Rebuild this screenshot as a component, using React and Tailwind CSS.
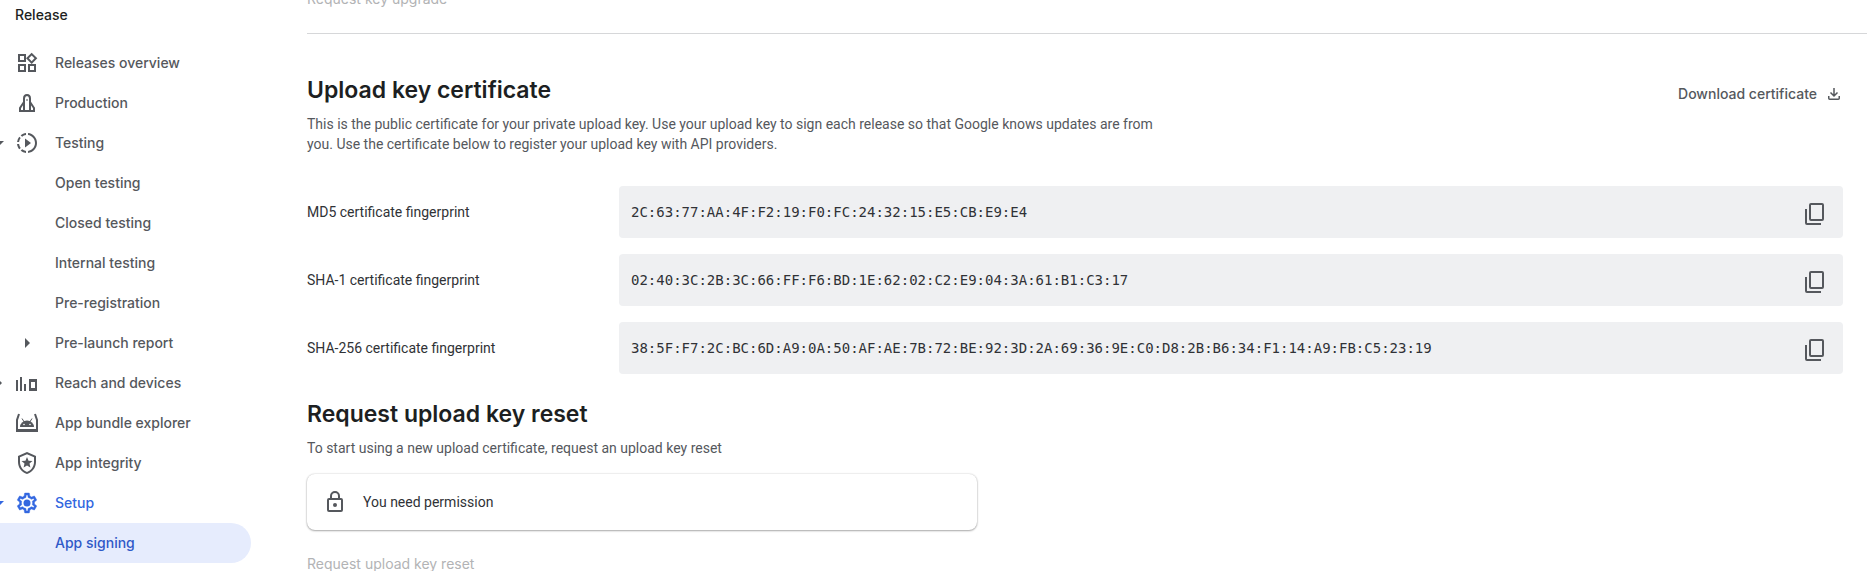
import React from "react";
import { MdOutlineWidgets, MdSlowMotionVideo, MdOutlineLocalPolice, MdArrowDropDown, MdArrowRight } from "react-icons/md";

const SANS = "font-['Inter',sans-serif]";

function ProductionIcon() {
  return (
    <svg viewBox="0 0 24 24" className="size-6" fill="none" stroke="currentColor" strokeWidth="2">
      <path d="M9 20V7.500C9 5 10.300 4 12 4s3 1 3 3.500V20" />
      <path d="M9 11l-4 6v3h14v-3l-4-6" />
      <path d="M12 8v2" strokeWidth="1" />
    </svg>
  );
}

function ReachIcon() {
  return (
    <svg viewBox="0 0 24 24" className="size-6" fill="none" stroke="currentColor" strokeWidth="2">
      <path d="M2 9v11M6 6v14M10 13v7" />
      <rect x="15" y="9" width="6" height="10" />
      <path d="M14 9.500h8M14 18.500h8" strokeWidth="3" />
    </svg>
  );
}

function BundleIcon() {
  return (
    <svg viewBox="0 0 24 24" className="size-6" fill="none" stroke="currentColor">
      <path d="M4 3L2 9v10h20V9l-2-6" strokeWidth="2" />
      <path d="M1 19.500h22" strokeWidth="3" />
      <path d="M5 16a7 6.500 0 0 1 14 0z" fill="currentColor" stroke="none" />
      <path d="M7 7.500l2.200 3.500M17 7.500l-2.200 3.500" />
      <circle cx="9" cy="13.500" r="0.800" fill="#fff" stroke="none" />
      <circle cx="15" cy="13.500" r="0.800" fill="#fff" stroke="none" />
    </svg>
  );
}

function SettingsIcon() {
  return (
    <svg viewBox="0 0 24 24" className="size-6" fill="currentColor">
      <path d="M19.430 12.980c.04-.32.07-.64.07-.98s-.03-.66-.07-.98l2.110-1.650c.19-.15.24-.42.12-.64l-2-3.460a.5.5 0 0 0-.61-.22l-2.490 1c-.52-.4-1.080-.73-1.690-.98l-.38-2.650A.488.488 0 0 0 14 2h-4c-.25 0-.46.18-.49.42l-.38 2.650c-.61.25-1.170.59-1.690.98l-2.490-1a.5.5 0 0 0-.61.22l-2 3.460c-.13.22-.07.49.12.64l2.110 1.650c-.04.32-.07.65-.07.98s.03.66.07.98l-2.110 1.650c-.19.15-.24.42-.12.64l2 3.460a.5.5 0 0 0 .61.22l2.490-1c.52.4 1.080.73 1.690.98l.38 2.650c.03.24.24.42.49.42h4c.25 0 .46-.18.49-.42l.38-2.650c.61-.25 1.170-.59 1.690-.98l2.490 1a.5.5 0 0 0 .61-.22l2-3.460c.12-.22.07-.49-.12-.64zm-1.980-1.710c.04.31.05.52.05.73s-.02.43-.05.73l-.14 1.130.89.7 1.080.84-.7 1.210-1.270-.51-1.040-.42-.9.68c-.43.32-.84.56-1.250.73l-1.060.43-.16 1.130-.2 1.350h-1.400l-.19-1.350-.16-1.130-1.060-.43c-.43-.18-.83-.41-1.230-.71l-.91-.7-1.060.43-1.270.51-.7-1.210 1.080-.84.89-.7-.14-1.130c-.03-.31-.05-.54-.05-.74s.02-.43.05-.73l.14-1.130-.89-.7-1.080-.84.7-1.210 1.270.51 1.040.42.9-.68c.43-.32.84-.56 1.250-.73l1.060-.43.16-1.130.2-1.350h1.390l.19 1.350.16 1.130 1.060.43c.43.18.83.41 1.230.71l.91.7 1.060-.43 1.270-.51.7 1.210-1.070.85-.89.7z" stroke="currentColor" strokeWidth="0.400" />
      <circle cx="12" cy="12" r="3.500" />
    </svg>
  );
}

function CopyIcon() {
  return (
    <svg viewBox="0 0 24 24" className="size-6" fill="none" stroke="currentColor" strokeWidth="2">
      <rect x="7" y="2" width="13" height="16" rx="1" />
      <path d="M3 7v14a1 1 0 0 0 1 1h14" />
    </svg>
  );
}

function DownloadIcon() {
  return (
    <svg viewBox="0 0 18 18" className="size-[18px]" fill="none" stroke="currentColor" strokeWidth="1.500">
      <path d="M9 3v8M5.500 7.500L9 11l3.500-3.500M3.750 11v2.250a1 1 0 0 0 1 1h8.500a1 1 0 0 0 1-1V11" />
    </svg>
  );
}

function LockIcon() {
  return (
    <svg viewBox="0 0 24 24" className="size-6" fill="none" stroke="currentColor" strokeWidth="2">
      <rect x="5" y="9" width="14" height="12" rx="1" />
      <path d="M8 9V6a4 4 0 0 1 8 0v3" />
      <circle cx="12" cy="15" r="2" fill="currentColor" stroke="none" />
    </svg>
  );
}

const NAV = [
  { label: "Releases overview", icon: <MdOutlineWidgets className="size-6" /> },
  { label: "Production", icon: <ProductionIcon /> },
  { label: "Testing", icon: <MdSlowMotionVideo className="size-6" />, caret: "down" },
  { label: "Open testing" },
  { label: "Closed testing" },
  { label: "Internal testing" },
  { label: "Pre-registration" },
  { label: "Pre-launch report", icon: <MdArrowRight className="size-6" /> },
  { label: "Reach and devices", icon: <ReachIcon />, caret: "right" },
  { label: "App bundle explorer", icon: <BundleIcon /> },
  { label: "App integrity", icon: <MdOutlineLocalPolice className="size-6" /> },
  { label: "Setup", icon: <SettingsIcon />, caret: "down", tone: "text-[#3367e0]" },
  { label: "App signing", tone: "text-[#3059c8] bg-[#e6ecfd]", current: true },
];

const PRINTS = [
  { label: "MD5 certificate fingerprint", value: "2C:63:77:AA:4F:F2:19:F0:FC:24:32:15:E5:CB:E9:E4" },
  { label: "SHA-1 certificate fingerprint", value: "02:40:3C:2B:3C:66:FF:F6:BD:1E:62:02:C2:E9:04:3A:61:B1:C3:17" },
  { label: "SHA-256 certificate fingerprint", value: "38:5F:F7:2C:BC:6D:A9:0A:50:AF:AE:7B:72:BE:92:3D:2A:69:36:9E:C0:D8:2B:B6:34:F1:14:A9:FB:C5:23:19" },
];

function NavItem({ label, icon, caret, tone = "text-[#55585d]", current }) {
  return (
    <li>
      <a
        href="#"
        aria-current={current ? "page" : undefined}
        className={`-ml-[13px] flex h-10 items-center rounded-r-full text-sm font-medium ${tone}`}
      >
        <span className="mr-1 w-6 shrink-0">
          {caret === "down" && <MdArrowDropDown className="size-6" />}
          {caret === "right" && <MdArrowRight className="size-6" />}
        </span>
        <span className="mr-4 w-6 shrink-0">{icon}</span>
        {label}
      </a>
    </li>
  );
}

export default function App() {
  return (
    <div className="flex h-screen overflow-hidden bg-white font-['Roboto',sans-serif] text-sm text-[#303236]">
      <nav className={`w-[251px] shrink-0 ${SANS}`} aria-label="Release">
        <h2 className="mt-[5px] mb-[18px] pl-[15px] text-sm font-medium text-[#1d1f22]">Release</h2>
        <ul>
          {NAV.map((item) => (
            <NavItem key={item.label} {...item} />
          ))}
        </ul>
      </nav>

      <main className="min-w-0 flex-1 pr-[31px] pl-14">
        <button type="button" disabled className={`-mt-[11px] block h-5 text-sm text-[#b2b3b5] ${SANS}`}>
          Request key upgrade
        </button>
        <hr className="mt-6 -mr-6 border-[#d6d7d9]" />

        <section className="pt-10">
          <div className="flex items-center justify-between">
            <h1 className={`text-[23px] leading-8 font-semibold text-[#1d1f22] ${SANS}`}>Upload key certificate</h1>
            <a href="#" className={`mt-2 flex items-center gap-2 text-sm font-medium text-[#55585d] ${SANS}`}>
              Download certificate
              <DownloadIcon />
            </a>
          </div>
          <p className="mt-2 max-w-[860px] text-[#55585d]">
            This is the public certificate for your private upload key. Use your upload key to sign each release so that Google knows updates are from you. Use the certificate below to register your upload key with API providers.
          </p>

          <dl className="mt-8 flex flex-col gap-4">
            {PRINTS.map(({ label, value }) => (
              <div key={label} className="flex items-center">
                <dt className="w-[312px] shrink-0">{label}</dt>
                <dd className="flex h-[52px] min-w-0 flex-1 items-center justify-between rounded bg-[#eff0f2] pr-4 pl-3 font-['DejaVu_Sans_Mono',monospace]">
                  {value}
                  <button type="button" aria-label={`Copy ${label}`} className="mt-1 text-[#55585d]">
                    <CopyIcon />
                  </button>
                </dd>
              </div>
            ))}
          </dl>
        </section>

        <section className="mt-6">
          <h2 className={`text-[23px] leading-8 font-semibold text-[#1d1f22] ${SANS}`}>Request upload key reset</h2>
          <p className="mt-2 text-[#55585d]">To start using a new upload certificate, request an upload key reset</p>
          <div className="mt-4 flex h-14 max-w-[670px] items-center gap-4 rounded-lg px-4 shadow-[0_1px_2px_rgba(0,0,0,0.3),0_0_2px_rgba(0,0,0,0.2)]">
            <span className="text-[#55585d]"><LockIcon /></span>
            You need permission
          </div>
          <button type="button" disabled className={`mt-6 block h-5 text-sm text-[#b2b3b5] ${SANS}`}>
            Request upload key reset
          </button>
        </section>
      </main>
    </div>
  );
}
